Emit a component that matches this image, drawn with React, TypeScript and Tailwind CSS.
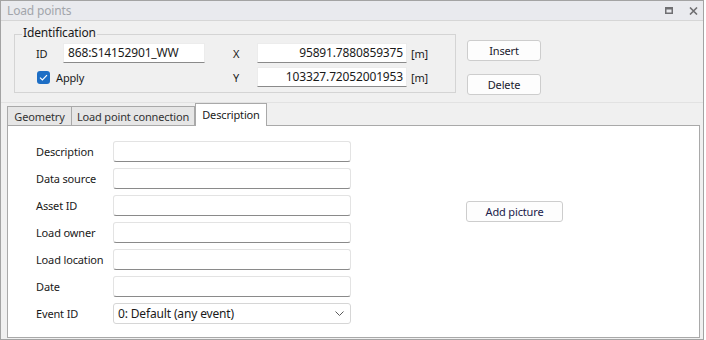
import React from "react";

const inputCls =
  "h-[21px] bg-white border border-[#e3e3e3] border-b-[#8a8a8a] rounded-[3px]";

function Field({ label }: { label: string }) {
  return (
    <div className="flex items-center h-[21px]">
      <div className="w-[77px] text-[#1a1a1a]">{label}</div>
      <div className={inputCls + " w-[238px]"} />
    </div>
  );
}

export default function App() {
  return (
    <div
      className="w-[706px] h-[340px] bg-white text-[11px] leading-none text-[#1a1a1a] tracking-[-0.15px]"
      style={{ fontFamily: '"Noto Sans", "Open Sans", sans-serif' }}
    >
      <div className="w-[704px] h-[340px] border border-[#a3a3a3] bg-[#f0f0f0] flex flex-col">
        {/* Title bar */}
        <div className="h-[20px] bg-[#e9eaee] border-b border-[#d6d6d6] flex items-center pl-[6px] pr-[5px] shrink-0">
          <span className="text-[#a2a5ab] text-[12px]">Load points</span>
          <div className="ml-auto flex items-center gap-[16px]">
            <svg width="8" height="7" viewBox="0 0 8 7">
              <rect x="0.75" y="0.75" width="6.5" height="5.5" fill="none" stroke="#6f6f72" strokeWidth="1.5" />
              <rect x="1" y="1" width="6" height="1.5" fill="#6f6f72" />
            </svg>
            <svg width="9" height="8" viewBox="0 0 9 8">
              <path d="M1 0.5 L8 7.5 M8 0.5 L1 7.5" stroke="#6f6f72" strokeWidth="1.6" />
            </svg>
          </div>
        </div>

        {/* Top area */}
        <div className="flex pl-[13px] pt-[13px] shrink-0">
          <div className="relative w-[442px] h-[59px] border border-[#d4d4d4] pt-[8px] pl-[21px]">
            <span className="absolute left-[7px] top-[-8px] bg-[#f0f0f0] px-[1px] text-[12px] text-[#1a1a1a]">
              Identification
            </span>
            <div className="flex items-center h-[20px]">
              <div className="w-[27px]">ID</div>
              <div className="h-[20px] w-[142px] bg-white border border-[#ececec] border-b-[#8a8a8a] flex items-center pl-[4px] text-[12px]">
                868:S14152901_WW
              </div>
              <div className="w-[28px]" />
              <div className="w-[24px]">X</div>
              <div className="h-[20px] w-[150px] bg-white border border-[#ececec] border-b-[#8a8a8a] flex items-center justify-end pr-[3px] text-[12px]">
                95891.7880859375
              </div>
              <div className="ml-[4px]">[m]</div>
            </div>
            <div className="flex items-center h-[20px] mt-[4px]">
              <div className="w-[27px] flex items-center">
                <div className="w-[13px] h-[13px] rounded-[3px] bg-[#1d6ec5] flex items-center justify-center ml-[1px]">
                  <svg width="9" height="7" viewBox="0 0 9 7">
                    <path d="M1 3.6 L3.4 6 L8 1.2" fill="none" stroke="white" strokeWidth="1.2" />
                  </svg>
                </div>
              </div>
              <div className="w-[142px] -ml-[7px]">Apply</div>
              <div className="w-[35px]" />
              <div className="w-[24px]">Y</div>
              <div className="h-[20px] w-[150px] bg-white border border-[#ececec] border-b-[#8a8a8a] flex items-center justify-end pr-[3px] text-[12px]">
                103327.72052001953
              </div>
              <div className="ml-[4px]">[m]</div>
            </div>
          </div>
          <div className="ml-[11px] pt-[6px] flex flex-col gap-[13px]">
            <button className="w-[74px] h-[21px] bg-[#fdfdfd] border border-[#cdcdcd] rounded-[3px] text-[#1a1a2e]">
              Insert
            </button>
            <button className="w-[74px] h-[21px] bg-[#fdfdfd] border border-[#cdcdcd] rounded-[3px] text-[#1a1a2e]">
              Delete
            </button>
          </div>
        </div>

        {/* separator */}
        <div className="mt-[7px] h-px bg-[#e2e2e2] shrink-0" />

        {/* Tabs */}
        <div className="flex-1 flex flex-col px-[6px] pb-[1px]">
          <div className="flex items-end h-[22px] shrink-0 relative z-10">
            <div className="h-[19px] w-[65px] bg-[#e6e6e6] border border-[#a9a9a9] border-b-0 flex items-center justify-center text-[#333]">
              Geometry
            </div>
            <div className="h-[19px] w-[123px] bg-[#e6e6e6] border border-[#a9a9a9] border-b-0 border-l-0 flex items-center justify-center text-[#333]">
              Load point connection
            </div>
            <div className="h-[23px] w-[72px] bg-white border border-[#a9a9a9] border-b-0 flex items-center justify-center text-[#1a1a1a] mb-[-1px] pb-[2px]">
              Description
            </div>
          </div>
          <div className="w-[693px] flex-1 bg-white border border-[#a9a9a9] flex pl-[28px] pt-[15px]">
            <div className="flex flex-col gap-[6px]">
              <Field label="Description" />
              <Field label="Data source" />
              <Field label="Asset ID" />
              <Field label="Load owner" />
              <Field label="Load location" />
              <Field label="Date" />
              <div className="flex items-center h-[21px]">
                <div className="w-[77px]">Event ID</div>
                <div className="h-[21px] w-[238px] bg-white border border-[#d6d6d6] rounded-[3px] flex items-center pl-[4px] pr-[6px] text-[12px]">
                  <span>0: Default (any event)</span>
                  <svg className="ml-auto" width="9" height="5" viewBox="0 0 9 5">
                    <path d="M0.5 0.5 L4.5 4.5 L8.5 0.5" fill="none" stroke="#5a5a5a" strokeWidth="1" />
                  </svg>
                </div>
              </div>
            </div>
            <div className="ml-[115px] mt-[60px]">
              <button className="w-[97px] h-[21px] bg-[#fdfdfd] border border-[#cdcdcd] rounded-[3px] text-[#20204a]">
                Add picture
              </button>
            </div>
          </div>
        </div>
      </div>
    </div>
  );
}
